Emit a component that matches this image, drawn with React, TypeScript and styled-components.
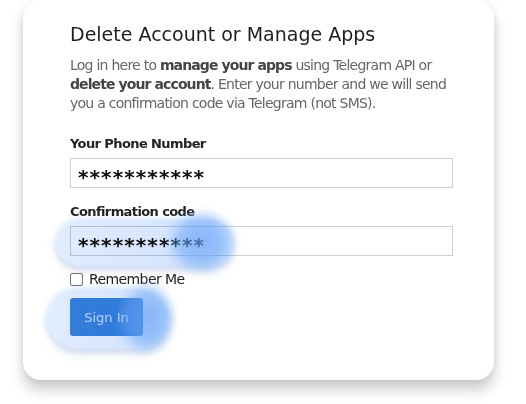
import React from "react";
import styled, { createGlobalStyle } from "styled-components";

const GlobalStyle = createGlobalStyle`
	html, body {
		margin: 0;
		padding: 0;
		background: #ffffff;
	}
	body {
		font-family: "DejaVu Sans", "Liberation Sans", sans-serif;
		color: #222;
	}
`;

const Page = styled.div`
	width: 526px;
	height: 404px;
	padding: 0 32px 0 23px;
	box-sizing: border-box;
	overflow: hidden;
`;

const Card = styled.div`
	position: relative;
	isolation: isolate;
	height: 380px;
	box-sizing: border-box;
	padding: 22px 41px 0 47px;
	background: #fff;
	border-radius: 18px;
	box-shadow: 0 10px 14px rgba(0, 0, 0, 0.2), 0 0 10px rgba(0, 0, 0, 0.07);
`;

const Title = styled.h1`
	margin: 0;
	font-size: 19px;
	line-height: 24px;
	font-weight: normal;
	color: #1e1e1e;
`;

const Intro = styled.p`
	margin: 10px 0 0;
	font-size: 14px;
	line-height: 19px;
	letter-spacing: -0.75px;
	color: #666;
	b {
		color: #444;
		letter-spacing: -0.9px;
	}
`;

const Label = styled.label<{ $top: number }>`
	display: block;
	margin-top: ${(p) => p.$top}px;
	font-size: 13px;
	line-height: 18px;
	font-weight: bold;
	letter-spacing: -0.6px;
	color: #222;
`;

const Field = styled.div`
	margin-top: 5px;
	height: 30px;
	box-sizing: border-box;
	border: 1px solid #cfcfcf;
	padding: 0 7px;
	display: flex;
	align-items: center;
	font-size: 20px;
	font-weight: bold;
	letter-spacing: 1.1px;
	color: #0c0c0c;
	overflow: hidden;
	span {
		display: block;
		transform: translateY(4px);
	}
`;

const CheckRow = styled.label`
	display: flex;
	align-items: center;
	gap: 6px;
	margin-top: 14px;
	font-size: 14px;
	line-height: 18px;
	letter-spacing: -0.6px;
	color: #222;
`;

const Box = styled.span`
	width: 11px;
	height: 11px;
	border: 1px solid #777;
	border-radius: 2px;
	background: #fff;
`;

const Button = styled.button`
	display: block;
	margin-top: 10px;
	width: 73px;
	height: 38px;
	border: none;
	border-radius: 3px;
	background: #3a88da;
	color: #d3e6fb;
	font-family: inherit;
	font-size: 13px;
	padding: 0;
`;

type Place = { $l: number; $t: number; $w: number; $h: number };

const Halo = styled.div<Place>`
	position: absolute;
	left: ${(p) => p.$l}px;
	top: ${(p) => p.$t}px;
	width: ${(p) => p.$w}px;
	height: ${(p) => p.$h}px;
	border-radius: 999px;
	background: linear-gradient(90deg, rgba(222, 234, 255, 0.9), rgba(205, 224, 255, 0.95));
	box-shadow: 0 5px 8px rgba(120, 140, 185, 0.25), 0 0 6px 2px rgba(215, 230, 255, 0.8);
	mix-blend-mode: multiply;
	filter: blur(1px);
	pointer-events: none;
`;

const Blob = styled.div<Place>`
	position: absolute;
	left: ${(p) => p.$l}px;
	top: ${(p) => p.$t}px;
	width: ${(p) => p.$w}px;
	height: ${(p) => p.$h}px;
	border-radius: 50%;
	background: radial-gradient(
		ellipse at center,
		rgba(98, 158, 244, 0.68) 0%,
		rgba(108, 166, 246, 0.55) 42%,
		rgba(130, 182, 250, 0.2) 62%,
		rgba(140, 190, 252, 0) 74%
	);
	filter: blur(2.5px);
	pointer-events: none;
`;

export default function App() {
	return (
		<>
			<GlobalStyle />
			<Page>
				<Card>
					<Title>Delete Account or Manage Apps</Title>
					<Intro>
						Log in here to <b>manage your apps</b> using Telegram API or{" "}
						<b>delete your account</b>. Enter your number and we will send
						you a confirmation code via Telegram (not SMS).
					</Intro>

					<Label $top={22}>Your Phone Number</Label>
					<Field>
						<span>***********</span>
					</Field>

					<Label $top={15}>Confirmation code</Label>
					<Field>
						<span>***********</span>
					</Field>

					<CheckRow>
						<Box />
						Remember Me
					</CheckRow>

					<Button>Sign In</Button>

					<Halo $l={34} $t={220} $w={176} $h={46} />
					<Blob $l={142} $t={208} $w={72} $h={68} />
					<Halo $l={25} $t={289} $w={121} $h={60} />
					<Blob $l={94} $t={280} $w={60} $h={76} />
				</Card>
			</Page>
		</>
	);
}
